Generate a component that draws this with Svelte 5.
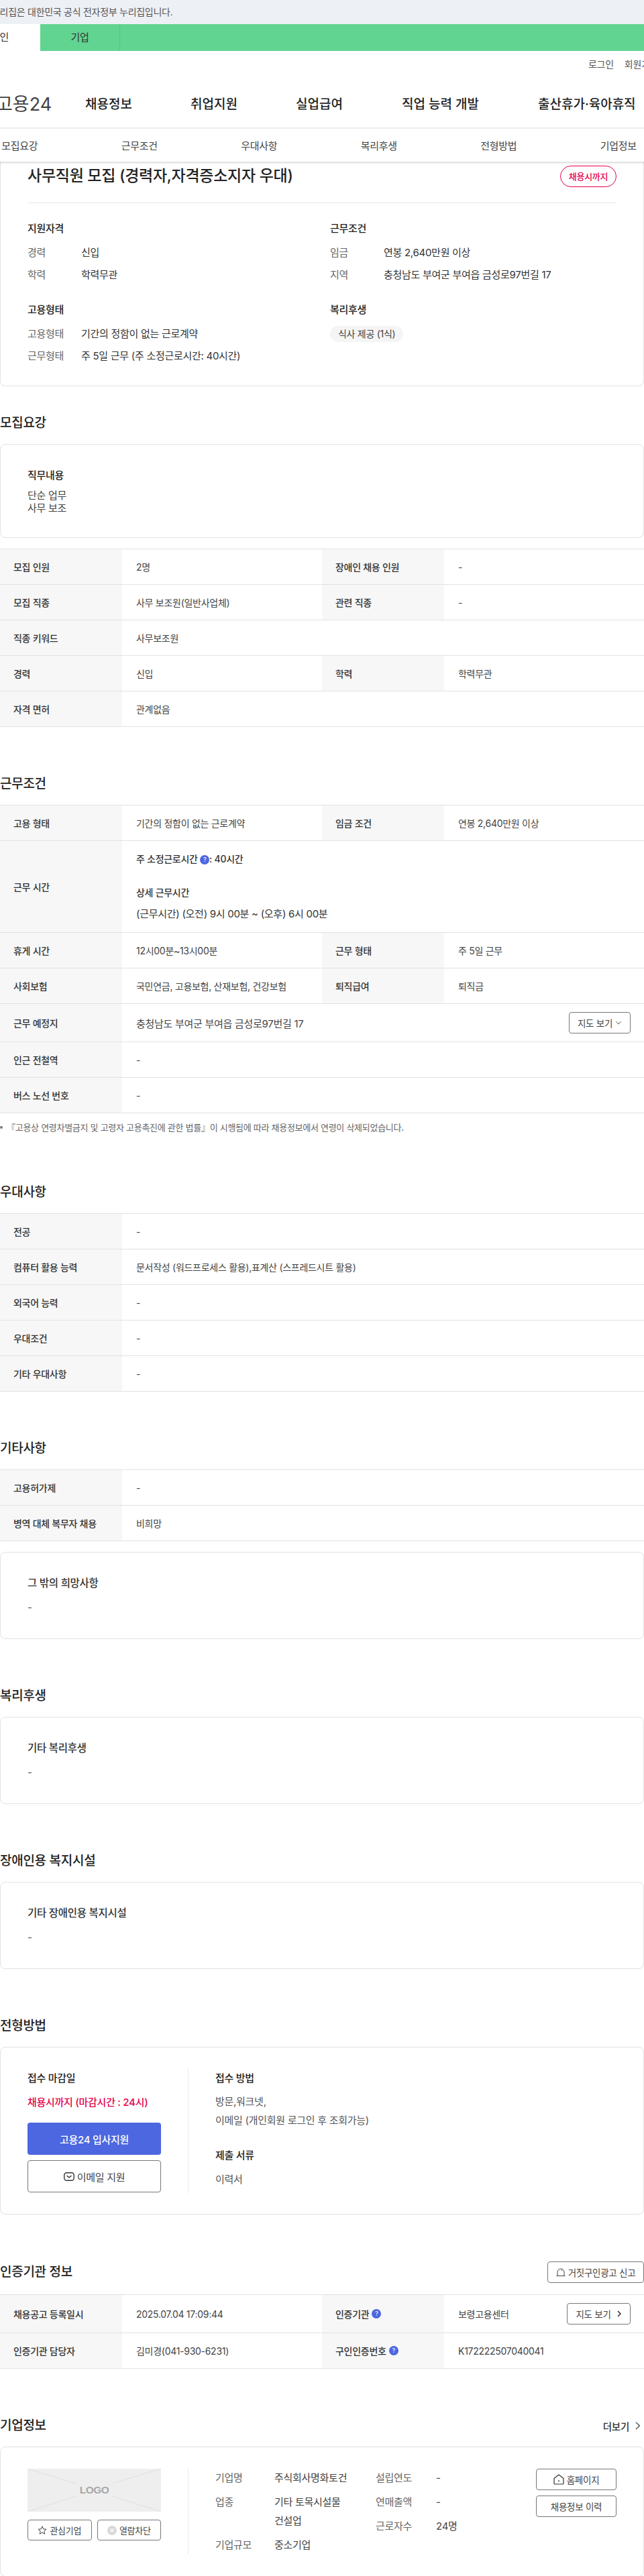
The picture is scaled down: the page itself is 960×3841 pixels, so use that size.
<script lang="ts">
  const mainNav = [
    { label: "채용정보", w: 157 },
    { label: "취업지원", w: 157 },
    { label: "실업급여", w: 158 },
    { label: "직업 능력 개발", w: 203 },
    { label: "출산휴가·육아휴직", w: 144 },
  ];
  const subNav = ["모집요강", "근무조건", "우대사항", "복리후생", "전형방법", "기업정보"];

  const recruit = [
    [["모집 인원", "2명"], ["장애인 채용 인원", "-"]],
    [["모집 직종", "사무 보조원(일반사업체)"], ["관련 직종", "-"]],
    [["직종 키워드", "사무보조원"]],
    [["경력", "신입"], ["학력", "학력무관"]],
    [["자격 면허", "관계없음"]],
  ];
  const favor = [
    ["전공", "-"],
    ["컴퓨터 활용 능력", "문서작성 (워드프로세스 활용),표계산 (스프레드시트 활용)"],
    ["외국어 능력", "-"],
    ["우대조건", "-"],
    ["기타 우대사항", "-"],
  ];
  const boxes = [
    { head: "복리후생", title: "기타 복리후생" },
    { head: "장애인용 복지시설", title: "기타 장애인용 복지시설" },
  ];
</script>

<div class="page">
  <div class="gov">누리집은 대한민국 공식 전자정부 누리집입니다.</div>

  <div class="tabs">
    <div class="tab on">개인</div>
    <div class="tab biz">기업</div>
  </div>

  <div class="util">
    <span>로그인</span>
    <span>회원가입</span>
  </div>

  <nav class="main">
    <span class="logo">고용24</span>
    {#each mainNav as n}
      <span class="mi" style="width:{n.w}px">{n.label}</span>
    {/each}
  </nav>

  <nav class="sub">
    {#each subNav as s}
      <span>{s}</span>
    {/each}
  </nav>

  <section class="card summary">
    <div class="sum-head">
      <h1>사무직원 모집 (경력자,자격증소지자 우대)</h1>
      <span class="chip">채용시까지</span>
    </div>
    <div class="sum-grid">
      <div class="sum-col">
        <h3>지원자격</h3>
        <dl>
          <dt>경력</dt><dd>신입</dd>
          <dt>학력</dt><dd>학력무관</dd>
        </dl>
      </div>
      <div class="sum-col">
        <h3>근무조건</h3>
        <dl>
          <dt>임금</dt><dd>연봉 2,640만원 이상</dd>
          <dt>지역</dt><dd>충청남도 부여군 부여읍 금성로97번길 17</dd>
        </dl>
      </div>
      <div class="sum-col">
        <h3>고용형태</h3>
        <dl>
          <dt>고용형태</dt><dd>기간의 정함이 없는 근로계약</dd>
          <dt>근무형태</dt><dd>주 5일 근무 (주 소정근로시간: 40시간)</dd>
        </dl>
      </div>
      <div class="sum-col">
        <h3>복리후생</h3>
        <span class="tag">식사 제공 (1식)</span>
      </div>
    </div>
  </section>

  <h2 class="head first">모집요강</h2>
  <section class="card job">
    <h3>직무내용</h3>
    <p>단순 업무<br />사무 보조</p>
  </section>

  <div class="table t1">
    {#each recruit as row}
      <div class="row">
        {#each row as c}
          <div class="th">{c[0]}</div>
          <div class="td">{c[1]}</div>
        {/each}
      </div>
    {/each}
  </div>

  <h2 class="head">근무조건</h2>
  <div class="table">
    <div class="row">
      <div class="th">고용 형태</div><div class="td">기간의 정함이 없는 근로계약</div>
      <div class="th">임금 조건</div><div class="td">연봉 2,640만원 이상</div>
    </div>
    <div class="row tall">
      <div class="th">근무 시간</div>
      <div class="td col">
        <strong class="hours">주 소정근로시간 <i class="q">?</i>: 40시간</strong>
        <strong class="detail">상세 근무시간</strong>
        <span class="range">(근무시간) (오전) 9시 00분 ~ (오후) 6시 00분</span>
      </div>
    </div>
    <div class="row">
      <div class="th">휴게 시간</div><div class="td">12시00분~13시00분</div>
      <div class="th">근무 형태</div><div class="td">주 5일 근무</div>
    </div>
    <div class="row">
      <div class="th">사회보험</div><div class="td">국민연금, 고용보험, 산재보험, 건강보험</div>
      <div class="th">퇴직급여</div><div class="td">퇴직금</div>
    </div>
    <div class="row place">
      <div class="th">근무 예정지</div>
      <div class="td between">
        <span class="addr">충청남도 부여군 부여읍 금성로97번길 17</span>
        <button class="btn map">지도 보기
          <svg width="10" height="10" viewBox="0 0 10 10"><path d="M1.500 3.200 5 7l3.500-3.800" fill="none" stroke="#555" stroke-width="1" /></svg>
        </button>
      </div>
    </div>
    <div class="row"><div class="th">인근 전철역</div><div class="td">-</div></div>
    <div class="row"><div class="th">버스 노선 번호</div><div class="td">-</div></div>
  </div>
  <p class="note"><i></i>『고용상 연령차별금지 및 고령자 고용촉진에 관한 법률』이 시행됨에 따라 채용정보에서 연령이 삭제되었습니다.</p>

  <h2 class="head favor">우대사항</h2>
  <div class="table">
    {#each favor as f}
      <div class="row"><div class="th">{f[0]}</div><div class="td">{f[1]}</div></div>
    {/each}
  </div>

  <h2 class="head">기타사항</h2>
  <div class="table">
    <div class="row"><div class="th">고용허가제</div><div class="td">-</div></div>
    <div class="row"><div class="th">병역 대체 복무자 채용</div><div class="td">비희망</div></div>
  </div>
  <section class="card plain wish">
    <h4>그 밖의 희망사항</h4>
    <p>-</p>
  </section>

  {#each boxes as b}
    <h2 class="head">{b.head}</h2>
    <section class="card plain">
      <h4>{b.title}</h4>
      <p>-</p>
    </section>
  {/each}

  <h2 class="head">전형방법</h2>
  <section class="card apply">
    <div class="ap-left">
      <h3>접수 마감일</h3>
      <p class="due">채용시까지 (마감시간 : 24시)</p>
      <button class="go">고용24 입사지원</button>
      <button class="mail">
        <svg width="16" height="13" viewBox="0 0 16 13" fill="none" stroke="#333" stroke-width="1.400">
          <rect x="0.800" y="0.800" width="14.400" height="11.400" rx="3.500" />
          <path d="M4.500 5 8 7.800 11.500 5" />
        </svg>
        이메일 지원
      </button>
    </div>
    <div class="ap-right">
      <h3>접수 방법</h3>
      <p class="how">방문,워크넷,<br />이메일 (개인회원 로그인 후 조회가능)</p>
      <h3 class="docs">제출 서류</h3>
      <p class="doc">이력서</p>
    </div>
  </section>

  <div class="head-row cert">
    <h2>인증기관 정보</h2>
    <button class="btn report">
      <svg width="14" height="12" viewBox="0 0 14 12" fill="none" stroke="#444" stroke-width="1">
        <path d="M0.500 11.500h13M2 11.500V6a5 5 0 0 1 10 0v5.500" />
        <path d="M8.500 2.500v1.500" />
      </svg>
      거짓구인광고 신고
    </button>
  </div>
  <div class="table">
    <div class="row first-cert">
      <div class="th">채용공고 등록일시</div><div class="td">2025.07.04 17:09:44</div>
      <div class="th">인증기관 <i class="q">?</i></div>
      <div class="td between">
        <span>보령고용센터</span>
        <button class="btn map2">지도 보기
          <svg width="8" height="10" viewBox="0 0 8 10"><path d="M2 1 6 5 2 9" fill="none" stroke="#333" stroke-width="1.500" /></svg>
        </button>
      </div>
    </div>
    <div class="row">
      <div class="th">인증기관 담당자</div><div class="td">김미경(041-930-6231)</div>
      <div class="th">구인인증번호 <i class="q">?</i></div><div class="td">K172222507040041</div>
    </div>
  </div>

  <div class="head-row corp">
    <h2>기업정보</h2>
    <span class="more">더보기
      <svg width="8" height="12" viewBox="0 0 8 12"><path d="M1 1 6.500 6 1 11" fill="none" stroke="#444" stroke-width="1.200" /></svg>
    </span>
  </div>
  <section class="card company">
    <div class="co-left">
      <div class="ph">
        <svg class="ph-x" viewBox="0 0 199 64" preserveAspectRatio="none">
          <path d="M0 0 72 22M199 0 127 22M0 64 72 41M199 64 127 41" stroke="#dedede" fill="none" />
        </svg>
        <span>LOGO</span>
      </div>
      <div class="co-btns">
        <button class="btn small">
          <svg width="14" height="14" viewBox="0 0 14 14"><path d="M7 1l1.700 3.900 4.300.4-3.200 2.800.9 4.200L7 10.200l-3.700 2.100.9-4.200L1 5.300l4.300-.4z" fill="none" stroke="#444" stroke-width="1" /></svg>
          관심기업
        </button>
        <button class="btn small">
          <svg width="14" height="14" viewBox="0 0 14 14"><circle cx="7" cy="7" r="7" fill="#d8d8d8" /><path d="M4.500 4.500l5 5m0-5-5 5" stroke="#fff" stroke-width="1.300" /></svg>
          열람차단
        </button>
      </div>
    </div>
    <div class="co-mid">
      <dl class="co-dl">
        <dt>기업명</dt><dd>주식회사명화토건</dd>
        <dt>업종</dt><dd>기타 토목시설물<br />건설업</dd>
        <dt>기업규모</dt><dd>중소기업</dd>
      </dl>
      <dl class="co-dl second">
        <dt>설립연도</dt><dd>-</dd>
        <dt>연매출액</dt><dd>-</dd>
        <dt>근로자수</dt><dd>24명</dd>
      </dl>
    </div>
    <div class="co-right">
      <button class="btn side">
        <svg width="16" height="16" viewBox="0 0 16 16" fill="none" stroke="#333" stroke-width="1.200">
          <path d="M1 14V6.500L8 1l7 5.500V14a1 1 0 0 1-1 1H2a1 1 0 0 1-1-1z" stroke-linejoin="round" />
          <path d="M8 9v2.500" />
        </svg>
        홈페이지
      </button>
      <button class="btn side">채용정보 이력</button>
    </div>
  </section>
</div>

<style>
  :global(body) {
    margin: 0;
    background: #fff;
  }
  .page {
    width: 960px;
    height: 3841px;
    overflow: hidden;
    font-family: Inter, "Noto Sans CJK KR", sans-serif;
    color: #333;
    font-size: 14px;
    letter-spacing: -0.02em;
  }
  h1, h2, h3, h4, p, dl, dd, dt {
    margin: 0;
  }
  button {
    font: inherit;
    letter-spacing: inherit;
    cursor: pointer;
  }
  .gov {
    height: 36px;
    line-height: 36px;
    background: #edf0f5;
    color: #555;
    font-size: 14px;
    margin-left: -13px;
    padding-left: 13px;
    text-indent: -13px;
    white-space: nowrap;
  }
  .tabs {
    height: 40px;
    display: flex;
    background: #62d491;
    overflow: hidden;
    font-size: 15px;
    line-height: 40px;
  }
  .tab.on {
    width: 60px;
    background: #fff;
    text-indent: -14px;
  }
  .tab.biz {
    width: 119px;
    box-sizing: border-box;
    text-align: center;
    border-right: 1px solid #57c785;
  }
  .util {
    height: 40px;
    box-sizing: border-box;
    padding: 10px 0 0 877px;
    display: flex;
    gap: 16px;
    white-space: nowrap;
    font-size: 14px;
    line-height: 20px;
    color: #555;
  }
  .main {
    height: 76px;
    display: flex;
    align-items: center;
    border-bottom: 2px solid #eee;
    box-sizing: border-box;
    white-space: nowrap;
    font-size: 19px;
    font-weight: 500;
    letter-spacing: 0;
    color: #222;
  }
  .logo {
    width: 127px;
    flex: none;
    margin-left: -6px;
    margin-right: 6px;
    font-size: 27px;
    font-weight: 400;
    color: #444;
    box-sizing: border-box;
  }
  .mi {
    flex: none;
    display: block;
  }
  .sub {
    height: 50px;
    margin-top: -1px;
    display: flex;
    align-items: center;
    margin-left: -60px;
    font-size: 15px;
    color: #444;
    box-shadow: 0 2px 3px rgba(0, 0, 0, 0.14);
    position: relative;
    width: 1080px;
  }
  .sub span {
    width: 178.500px;
    text-align: center;
    flex: none;
    white-space: nowrap;
  }
  .card {
    border: 1px solid #e2e2e2;
    border-radius: 8px;
    box-sizing: border-box;
  }
  .summary {
    height: 335px;
    padding: 0 40px;
    border-top: 0;
    border-radius: 0 0 8px 8px;
  }
  .sum-head {
    height: 62px;
    display: flex;
    justify-content: space-between;
    border-bottom: 1px solid #e6e6e6;
    box-sizing: border-box;
  }
  h1 {
    font-size: 23px;
    font-weight: 500;
    line-height: 42px;
    color: #222;
  }
  .chip {
    box-sizing: border-box;
    width: 84px;
    height: 32px;
    margin-top: 6px;
    border: 1px solid #e6004d;
    border-radius: 16px;
    color: #e6004d;
    text-align: center;
    line-height: 30px;
    font-size: 13px;
    font-weight: 500;
  }
  .sum-grid {
    display: grid;
    grid-template-columns: 451px 1fr;
    grid-template-rows: 121px auto;
    gap: 0;
    padding-top: 26px;
  }
  h3 {
    font-size: 15px;
    font-weight: 500;
    color: #222;
    line-height: 24px;
  }
  .sum-col h3 {
    margin-bottom: 12px;
  }
  .sum-col dl {
    display: grid;
    grid-template-columns: 80px 1fr;
    row-gap: 8px;
    line-height: 24.500px;
    font-size: 15px;
  }
  dt {
    color: #666;
  }
  .tag {
    display: inline-block;
    height: 24px;
    line-height: 24px;
    padding: 0 12px;
    border-radius: 12px;
    background: #f5f5f5;
    font-size: 14px;
    color: #444;
  }
  .head {
    font-size: 19px;
    font-weight: 500;
    color: #222;
    line-height: 30px;
    padding-top: 70px;
    margin-bottom: 16px;
  }
  .head.first {
    padding-top: 40px;
  }
  .job {
    height: 140px;
    padding: 34px 40px 0;
  }
  .job h3 {
    margin-bottom: 8px;
  }
  .job p {
    font-size: 15px;
    line-height: 19px;
    color: #444;
  }
  .table {
    border-top: 1px solid #e2e2e2;
  }
  .t1 {
    margin-top: 16px;
  }
  .row {
    display: flex;
    min-height: 52px;
    border-bottom: 1px solid #e2e2e2;
  }
  .th {
    width: 182px;
    flex: none;
    box-sizing: border-box;
    padding-left: 20px;
    background: #f7f7f7;
    font-weight: 500;
    display: flex;
    align-items: center;
    gap: 4px;
    color: #333;
  }
  .td {
    width: 298px;
    flex: none;
    box-sizing: border-box;
    padding-left: 21px;
    display: flex;
    align-items: center;
    color: #444;
  }
  .row > .td:last-child {
    flex: 1;
  }
  .tall {
    height: 136px;
  }
  .tall .th {
    align-items: flex-start;
    padding-top: 58px;
  }
  .col {
    flex-direction: column;
    align-items: flex-start;
    justify-content: flex-start;
    padding-top: 16px;
    color: #333;
  }
  .hours, .detail {
    font-weight: 500;
    line-height: 22px;
  }
  .detail {
    margin-top: 28px;
  }
  .range {
    margin-top: 10px;
    font-size: 15px;
    line-height: 22px;
  }
  .q {
    display: inline-block;
    width: 14px;
    height: 14px;
    line-height: 14px;
    border-radius: 50%;
    background: #4c67e0;
    color: #fff;
    font-size: 9px;
    font-style: normal;
    text-align: center;
    vertical-align: 1px;
  }
  .place {
    height: 56px;
  }
  .between {
    justify-content: space-between;
    padding-right: 20px;
  }
  .addr {
    font-size: 15px;
    color: #444;
  }
  .btn {
    background: #fff;
    border: 1px solid #777;
    border-radius: 4px;
    display: inline-flex;
    align-items: center;
    justify-content: center;
    gap: 4px;
    padding: 0;
    color: #444;
    font-size: 13.500px;
    white-space: nowrap;
    box-sizing: border-box;
  }
  .map {
    width: 92px;
    height: 32px;
  }
  .note {
    margin-top: 11px;
    display: flex;
    align-items: center;
    gap: 6px;
    font-size: 13px;
    line-height: 20px;
    color: #666;
    white-space: nowrap;
  }
  .note i {
    width: 4px;
    height: 4px;
    border-radius: 50%;
    background: #777;
  }
  .favor {
    padding-top: 72px;
  }
  .wish {
    margin-top: 16px;
  }
  .plain {
    height: 130px;
    padding: 34px 40px 0;
  }
  .plain h4 {
    font-size: 15.500px;
    font-weight: 500;
    line-height: 24px;
    color: #333;
  }
  .plain p {
    margin-top: 12px;
    line-height: 24px;
    font-size: 15px;
    color: #555;
  }
  .apply {
    height: 250px;
    padding: 32px 40px 0;
    display: flex;
  }
  .ap-left {
    width: 240px;
    box-sizing: border-box;
    padding-right: 40px;
    height: 185px;
    border-right: 1px solid #eaeaea;
    flex: none;
    margin-right: 40px;
  }
  .ap-left > h3, .ap-right > h3:first-child {
    margin-top: 2px;
  }
  .due {
    margin-top: 12px;
    color: #e6004d;
    font-size: 15px;
    font-weight: 500;
    line-height: 24px;
  }
  .go, .mail {
    display: flex;
    align-items: center;
    justify-content: center;
    gap: 4px;
    width: 199px;
    box-sizing: border-box;
    border-radius: 4px;
    font-size: 15px;
  }
  .go {
    height: 48px;
    margin-top: 18px;
    border: 0;
    background: #4c67e0;
    color: #fff;
    font-weight: 500;
  }
  .mail {
    height: 48px;
    margin-top: 8px;
    background: #fff;
    border: 1px solid #777;
    color: #444;
  }
  .how {
    margin-top: 9px;
    font-size: 15px;
    line-height: 28px;
    color: #555;
  }
  .docs {
    margin-top: 26px;
  }
  .doc {
    margin-top: 12px;
    font-size: 15px;
    line-height: 24px;
    color: #555;
  }
  .head-row {
    display: flex;
    justify-content: space-between;
    align-items: center;
  }
  .head-row h2 {
    font-size: 19px;
    font-weight: 500;
    line-height: 30px;
    color: #222;
  }
  .cert {
    padding-top: 70px;
    margin-bottom: 17px;
  }
  .report {
    width: 144px;
    height: 32px;
  }
  .first-cert {
    min-height: 56px;
  }
  .map2 {
    width: 95px;
    height: 32px;
    gap: 8px;
  }
  .corp {
    padding-top: 70px;
    margin-bottom: 16px;
  }
  .more {
    display: inline-flex;
    align-items: center;
    gap: 9px;
    font-size: 14.500px;
    font-weight: 500;
    padding-right: 5px;
  }
  .company {
    height: 194px;
    padding: 32px 40px 0;
    display: flex;
  }
  .co-left {
    width: 240px;
    flex: none;
    box-sizing: border-box;
    height: 128px;
    padding-right: 40px;
    border-right: 1px solid #eaeaea;
    margin-right: 40px;
  }
  .ph {
    height: 64px;
    position: relative;
    background: #eeeeee;
    display: flex;
    align-items: center;
    justify-content: center;
    font-family: "Liberation Sans", sans-serif;
    font-size: 15.500px;
    color: #a8a8a8;
    font-weight: 700;
    letter-spacing: -0.5px;
  }
  .ph-x {
    position: absolute;
    inset: 0;
    width: 100%;
    height: 100%;
  }
  .ph span {
    position: relative;
  }
  .co-btns {
    display: flex;
    gap: 8px;
    margin-top: 12px;
  }
  .small {
    height: 31px;
    flex: 1;
    font-size: 13px;
  }
  .co-mid {
    display: flex;
    width: 478px;
    flex: none;
    font-size: 15px;
  }
  .co-dl {
    display: grid;
    grid-template-columns: 88px 151px;
    row-gap: 8px;
    line-height: 28px;
    align-content: start;
  }
  .co-dl.second {
    grid-template-columns: 90px 1fr;
  }
  .co-dl dd {
    color: #444;
  }
  .co-right {
    flex: none;
    width: 120px;
    display: flex;
    flex-direction: column;
    gap: 8px;
  }
  .side {
    height: 32px;
  }
</style>
